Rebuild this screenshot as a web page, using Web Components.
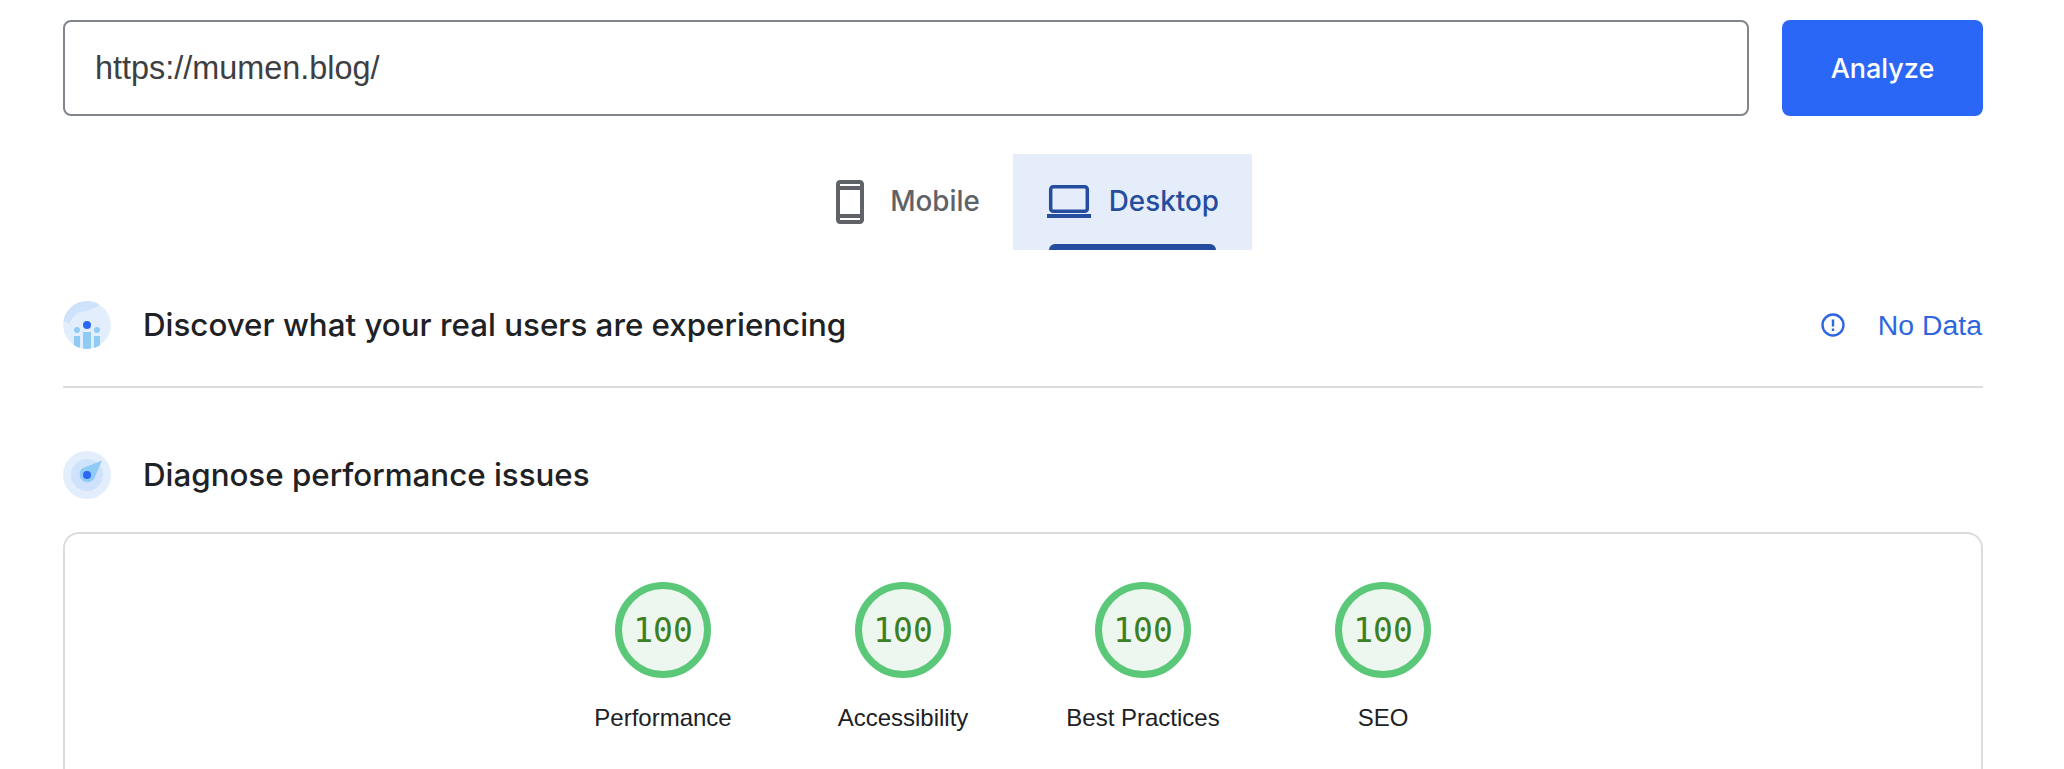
<!DOCTYPE html>
<html>
<head>
<meta charset="utf-8">
<title>PageSpeed Insights</title>
<style>
  html, body { margin: 0; height: 769px; overflow: hidden; background: #fff; }
  body { font-family: "Liberation Sans", Arial, sans-serif; }
</style>
</head>
<body>
<psi-page>
  <psi-url-bar url="https://mumen.blog/"></psi-url-bar>
  <psi-tabs></psi-tabs>
  <psi-section heading="Discover what your real users are experiencing" icon="crux" status="No Data" ruled></psi-section>
  <psi-section heading="Diagnose performance issues" icon="lab"></psi-section>
  <psi-card>
    <psi-gauge score="100">Performance</psi-gauge>
    <psi-gauge score="100">Accessibility</psi-gauge>
    <psi-gauge score="100">Best Practices</psi-gauge>
    <psi-gauge score="100">SEO</psi-gauge>
  </psi-card>
</psi-page>

<script>
const ICONS = {
  crux: `<svg width="48" height="48" viewBox="0 0 48 48">
      <clipPath id="globe"><circle cx="24" cy="24" r="24"/></clipPath>
      <g clip-path="url(#globe)">
        <circle cx="24" cy="24" r="24" fill="#e3eefd"/>
        <path d="M0 0v20c2 0 4 1 6 3 2-4 5-8 9-11 5-2 11-2 15-5 2-1 4-1 6-2V0z" fill="#cfe2fb"/>
        <rect x="20" y="31" width="8" height="17" fill="#8fcbf5"/>
        <rect x="11" y="35" width="6" height="13" fill="#8fcbf5"/>
        <rect x="31" y="35" width="6" height="13" fill="#8fcbf5"/>
      </g>
      <circle cx="24" cy="24" r="4" fill="#2b67f6"/>
      <circle cx="14" cy="29" r="3" fill="#8fcbf5"/>
      <circle cx="34" cy="29" r="3" fill="#8fcbf5"/>
    </svg>`,
  lab: `<svg width="48" height="48" viewBox="0 0 48 48">
      <circle cx="24" cy="24" r="24" fill="#e3eefd"/>
      <circle cx="24" cy="24" r="16" fill="#cfe2fb"/>
      <path d="M39 9.500 31 28A8 8 0 1 1 19 17.500z" fill="#8fcbf5"/>
      <circle cx="24" cy="24" r="4" fill="#2b67f6"/>
    </svg>`
};

class PsiPage extends HTMLElement {
  constructor() {
    super();
    this.attachShadow({ mode: 'open' }).innerHTML = `
      <style>
        :host { display: block; padding: 20px 81px 0 63px; }
      </style>
      <slot></slot>`;
  }
}

class PsiUrlBar extends HTMLElement {
  connectedCallback() {
    const url = this.getAttribute('url') || '';
    this.attachShadow({ mode: 'open' }).innerHTML = `
      <style>
        :host { display: flex; gap: 33px; height: 96px; }
        .field {
          flex: 1; box-sizing: border-box; display: flex; align-items: center;
          padding-left: 30px; border: 2px solid #80868b; border-radius: 8px;
          font: 32.4px "Liberation Sans", Arial, sans-serif; color: #3c4043;
        }
        .go {
          width: 201px; display: flex; align-items: center; justify-content: center;
          background: #2b67f6; color: #fff; border-radius: 8px;
          font: 500 27px Inter, "Liberation Sans", sans-serif;
        }
      </style>
      <div class="field">${url}</div>
      <div class="go">Analyze</div>`;
  }
}

class PsiTabs extends HTMLElement {
  constructor() {
    super();
    this.attachShadow({ mode: 'open' }).innerHTML = `
      <style>
        :host { display: flex; justify-content: center; margin-top: 38px; height: 96px; }
        .tab {
          position: relative; display: flex; align-items: center; gap: 16px;
          padding: 0 33px 0 32px; box-sizing: border-box; height: 96px;
          font: 500 27.8px Inter, "Liberation Sans", sans-serif; color: #5f6368;
        }
        .tab span { position: relative; top: -1px; }
        .tab.on { background: #e5edfa; color: #244da0; }
        .tab.on::after {
          content: ""; position: absolute; left: 36px; right: 36px; bottom: 0; height: 6px;
          background: #244da0; border-radius: 6px 6px 0 0;
        }
        svg { display: block; }
      </style>
      <div class="tab">
        <svg width="48" height="48" viewBox="0 0 24 24" fill="#5f6368"><path d="M17 1.010 7 1c-1.100 0-2 .9-2 2v18c0 1.100.9 2 2 2h10c1.100 0 2-.9 2-2V3c0-1.100-.9-1.990-2-1.990zM17 21H7v-1h10v1zm0-3H7V6h10v12zM7 4V3h10v1H7z"/></svg>
        <span>Mobile</span>
      </div>
      <div class="tab on">
        <svg width="48" height="48" viewBox="0 0 48 48" fill="none" stroke="#244da0" stroke-width="3.500"><rect x="5.700" y="8.700" width="36.600" height="24.600" rx="2.500"/><path d="M2 38h44" stroke-width="4"/></svg>
        <span>Desktop</span>
      </div>`;
  }
}

class PsiSection extends HTMLElement {
  connectedCallback() {
    const status = this.getAttribute('status');
    const ruled = this.hasAttribute('ruled');
    this.attachShadow({ mode: 'open' }).innerHTML = `
      <style>
        :host { display: block; }
        .row {
          display: flex; align-items: center; gap: 32px;
          font: 500 31.3px Inter, "Liberation Sans", sans-serif; color: #202124;
        }
        .row.ruled { padding: 51px 0 37px; border-bottom: 2px solid #dadce0; }
        .row.plain { padding: 63px 0 33px; }
        .ic { display: block; width: 48px; height: 48px; }
        .title { flex: 1; }
        .status {
          display: flex; align-items: center; gap: 33px; padding-right: 1px; color: #2f66e0;
          font: 28.4px "Liberation Sans", Arial, sans-serif;
        }
        .status svg { display: block; }
      </style>
      <div class="row ${ruled ? 'ruled' : 'plain'}">
        <span class="ic">${ICONS[this.getAttribute('icon')]}</span>
        <span class="title">${this.getAttribute('heading')}</span>
        ${status ? `<span class="status">
          <svg width="24" height="24" viewBox="0 0 24 24" fill="none" stroke="#2f66e0" stroke-width="2.400"><circle cx="12" cy="12" r="10.500"/><path d="M12 6.500v7M12 15.500v2.500"/></svg>
          ${status}</span>` : ''}
      </div>`;
  }
}

class PsiCard extends HTMLElement {
  constructor() {
    super();
    this.attachShadow({ mode: 'open' }).innerHTML = `
      <style>
        :host {
          display: flex; justify-content: center; box-sizing: border-box;
          padding-top: 48px; height: 400px;
          border: 2px solid #dadce0; border-radius: 16px;
        }
      </style>
      <slot></slot>`;
  }
}

class PsiGauge extends HTMLElement {
  connectedCallback() {
    this.attachShadow({ mode: 'open' }).innerHTML = `
      <style>
        :host { display: flex; flex-direction: column; align-items: center; width: 240px; }
        .dial {
          box-sizing: border-box; width: 96px; height: 96px; border-radius: 50%;
          border: 7px solid #5ac878; background: #edf7ef;
          display: flex; align-items: center; justify-content: center;
          font: 33px "DejaVu Sans Mono", monospace; color: #3d8024;
        }
        .name {
          margin-top: 26px; font: 24px "Liberation Sans", Arial, sans-serif; color: #202124;
          white-space: nowrap;
        }
      </style>
      <div class="dial">${this.getAttribute('score')}</div>
      <div class="name"><slot></slot></div>`;
  }
}

customElements.define('psi-page', PsiPage);
customElements.define('psi-url-bar', PsiUrlBar);
customElements.define('psi-tabs', PsiTabs);
customElements.define('psi-section', PsiSection);
customElements.define('psi-card', PsiCard);
customElements.define('psi-gauge', PsiGauge);
</script>
</body>
</html>
